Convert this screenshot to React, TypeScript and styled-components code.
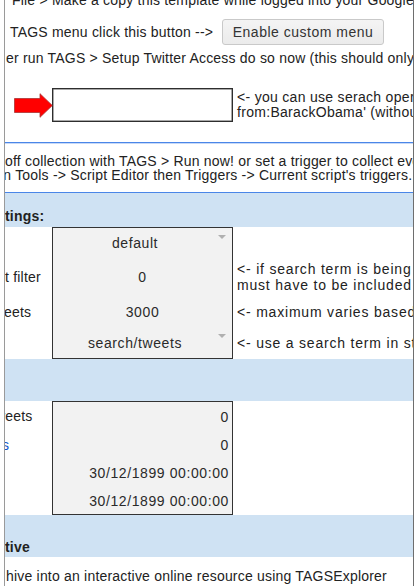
import React from "react";
import styled, { createGlobalStyle } from "styled-components";

const Global = createGlobalStyle`
  html, body { margin: 0; padding: 0; background: #fff; }
  body {
    font-family: "Liberation Sans", Arial, sans-serif;
    font-size: 14px;
    letter-spacing: 0.2px;
    color: #222;
  }
`;

const Viewport = styled.div`
  width: 418px;
  height: 586px;
  overflow: hidden;
  background: #fff;
`;

const Sheet = styled.div`
  margin: -14px 0 0 4px;
  width: 408px;
  height: 620px;
  border-left: 1px solid #9a9a9a;
  border-right: 1px solid #6e6e6e;
  overflow: hidden;
  display: flex;
  flex-direction: column;
`;

const TextRow = styled.div<{ $h: number; $align?: string; $lh?: number }>`
  flex: none;
  height: ${(p) => p.$h}px;
  display: flex;
  flex-direction: column;
  justify-content: ${(p) => p.$align ?? "center"};
  line-height: ${(p) => p.$lh ?? 15}px;
  white-space: nowrap;
`;

const Line = styled.span<{ $indent?: number; $bold?: boolean; $pt?: number }>`
  display: block;
  margin-left: ${(p) => p.$indent ?? 0}px;
  padding-top: ${(p) => p.$pt ?? 0}px;
  font-weight: ${(p) => (p.$bold ? "bold" : "normal")};
  white-space: nowrap;
`;

const ButtonRow = styled.div`
  flex: none;
  height: 33px;
  display: flex;
  align-items: center;
  white-space: nowrap;
`;

const ButtonLabel = styled.span`
  flex: none;
  width: 212px;
  padding-left: 5px;
`;

const MenuButton = styled.button`
  flex: none;
  width: 162px;
  height: 26px;
  padding: 0;
  font: 14px "Liberation Sans", Arial, sans-serif;
  letter-spacing: 0.5px;
  color: #333;
  background: linear-gradient(#f4f4f4, #ebebeb);
  border: 1px solid #c9c9c9;
  border-radius: 3px;
`;

const Rule = styled.div`
  flex: none;
  height: 1px;
  background: #4a86e8;
  box-shadow: 0 0.5px 0 #8fb4f0;
`;

const Band = styled.div<{ $h: number; $pb: number }>`
  flex: none;
  height: ${(p) => p.$h}px;
  background: #cfe2f3;
  display: flex;
  align-items: flex-end;
  padding-bottom: ${(p) => p.$pb}px;
  box-sizing: border-box;
  line-height: 15px;
  font-weight: bold;
  white-space: nowrap;
`;

const Grid = styled.div<{ $rows: string }>`
  flex: none;
  display: grid;
  grid-template-columns: 47px 181px 1fr;
  grid-template-rows: ${(p) => p.$rows};
`;

const LabelCell = styled.div<{ $link?: boolean }>`
  display: flex;
  align-items: center;
  overflow: hidden;
  white-space: nowrap;
  color: ${(p) => (p.$link ? "#1155cc" : "#222")};
`;

const ArrowCell = styled.div`
  display: flex;
  align-items: center;
  justify-content: flex-end;
  overflow: visible;
  position: relative;
  z-index: 1;
`;

const InputCell = styled.div`
  display: flex;
  align-items: center;
`;

const InputBox = styled.div`
  width: 181px;
  height: 34px;
  box-sizing: border-box;
  border: 1px solid #2e2e2e;
  box-shadow: inset 0 0 0 0.5px #555;
  background: #fff;
`;

const ValueCell = styled.div<{
  $first?: boolean;
  $last?: boolean;
  $align?: "center" | "right";
  $drop?: boolean;
}>`
  position: relative;
  display: flex;
  align-items: center;
  justify-content: ${(p) => (p.$align === "right" ? "flex-end" : "center")};
  padding-right: ${(p) => (p.$drop ? 15 : p.$align === "right" ? 3 : 0)}px;
  background: #f2f2f2;
  border-left: 1px solid #333;
  border-right: 1px solid #333;
  border-top: ${(p) => (p.$first ? "1px solid #333" : "none")};
  border-bottom: ${(p) => (p.$last ? "1px solid #333" : "none")};
  box-sizing: border-box;
  color: #2a2a2a;
  letter-spacing: 0.6px;
  white-space: nowrap;
`;

const DropArrow = styled.span<{ $top: number }>`
  position: absolute;
  right: 6px;
  top: ${(p) => p.$top}px;
  width: 0;
  height: 0;
  border-left: 4px solid transparent;
  border-right: 4px solid transparent;
  border-top: 4px solid #b0b0b0;
`;

const NoteCell = styled.div<{ $lh?: number; $ls?: number }>`
  display: flex;
  flex-direction: column;
  justify-content: center;
  padding-left: 4px;
  line-height: ${(p) => p.$lh ?? 15}px;
  letter-spacing: ${(p) => p.$ls ?? 0.8}px;
  white-space: nowrap;
  overflow: hidden;
  color: #222;
`;

const RedArrow = () => (
  <svg width="39" height="25" viewBox="0 0 39 25" style={{ marginRight: -1 }}>
    <polygon
      points="0.5,5.5 26,5.5 26,0.7 38.3,12.5 26,24.3 26,19.5 0.5,19.5"
      fill="#ff0000"
      stroke="#a33"
      strokeWidth="0.8"
    />
  </svg>
);

export default function App() {
  return (
    <Viewport>
      <Global />
      <Sheet>
        <TextRow $h={29}>
          <Line $indent={7}>
            File &gt; Make a copy this template while logged into your Google account
          </Line>
        </TextRow>

        <ButtonRow>
          <ButtonLabel>TAGS menu click this button --&gt;</ButtonLabel>
          <MenuButton>Enable custom menu</MenuButton>
        </ButtonRow>

        <TextRow $h={20}>
          <Line $indent={1}>
            er run TAGS &gt; Setup Twitter Access do so now (this should only be required once)
          </Line>
        </TextRow>

        <Grid $rows="74px">
          <ArrowCell>
            <RedArrow />
          </ArrowCell>
          <InputCell>
            <InputBox />
          </InputCell>
          <NoteCell $lh={15} $ls={0.3}>
            <span>&lt;- you can use serach operators</span>
            <span>from:BarackObama' (without quotes)</span>
          </NoteCell>
        </Grid>

        <Rule />

        <TextRow $h={49} $lh={14}>
          <Line $indent={0}>
            off collection with TAGS &gt; Run now! or set a trigger to collect every hour
          </Line>
          <Line $indent={-5}>
            in Tools -&gt; Script Editor then Triggers -&gt; Current script's triggers...
          </Line>
        </TextRow>

        <Rule />

        <Band $h={34} $pb={3}>
          <Line $indent={0} $bold>
            tings:
          </Line>
        </Band>

        <Grid $rows="31px 38px 32px 31px">
          <LabelCell />
          <ValueCell $first $drop>
            default
            <DropArrow $top={7} />
          </ValueCell>
          <NoteCell />

          <LabelCell>t filter</LabelCell>
          <ValueCell>0</ValueCell>
          <NoteCell $lh={16}>
            <span>&lt;- if search term is being used</span>
            <span>must have to be included</span>
          </NoteCell>

          <LabelCell>
            <Line $indent={-1}>eets</Line>
          </LabelCell>
          <ValueCell>3000</ValueCell>
          <NoteCell>
            <span>&lt;- maximum varies based on</span>
          </NoteCell>

          <LabelCell />
          <ValueCell $last $drop>
            search/tweets
            <DropArrow $top={6} />
          </ValueCell>
          <NoteCell>
            <span>&lt;- use a search term in st</span>
          </NoteCell>
        </Grid>

        <Band $h={42} $pb={3} />

        <Grid $rows="30px 28px 28px 28px">
          <LabelCell>
            <Line $indent={-10}>weets</Line>
          </LabelCell>
          <ValueCell $first $align="right">
            0
          </ValueCell>
          <NoteCell />

          <LabelCell $link>
            <Line $indent={-3}>s</Line>
          </LabelCell>
          <ValueCell $align="right">0</ValueCell>
          <NoteCell />

          <LabelCell />
          <ValueCell $align="right">30/12/1899 00:00:00</ValueCell>
          <NoteCell />

          <LabelCell />
          <ValueCell $last $align="right">
            30/12/1899 00:00:00
          </ValueCell>
          <NoteCell />
        </Grid>

        <Band $h={42} $pb={2}>
          <Line $bold>tive</Line>
        </Band>

        <TextRow $h={50} $align="flex-start">
          <Line $indent={1} $pt={12}>
            hive into an interactive online resource using TAGSExplorer
          </Line>
        </TextRow>
      </Sheet>
    </Viewport>
  );
}
